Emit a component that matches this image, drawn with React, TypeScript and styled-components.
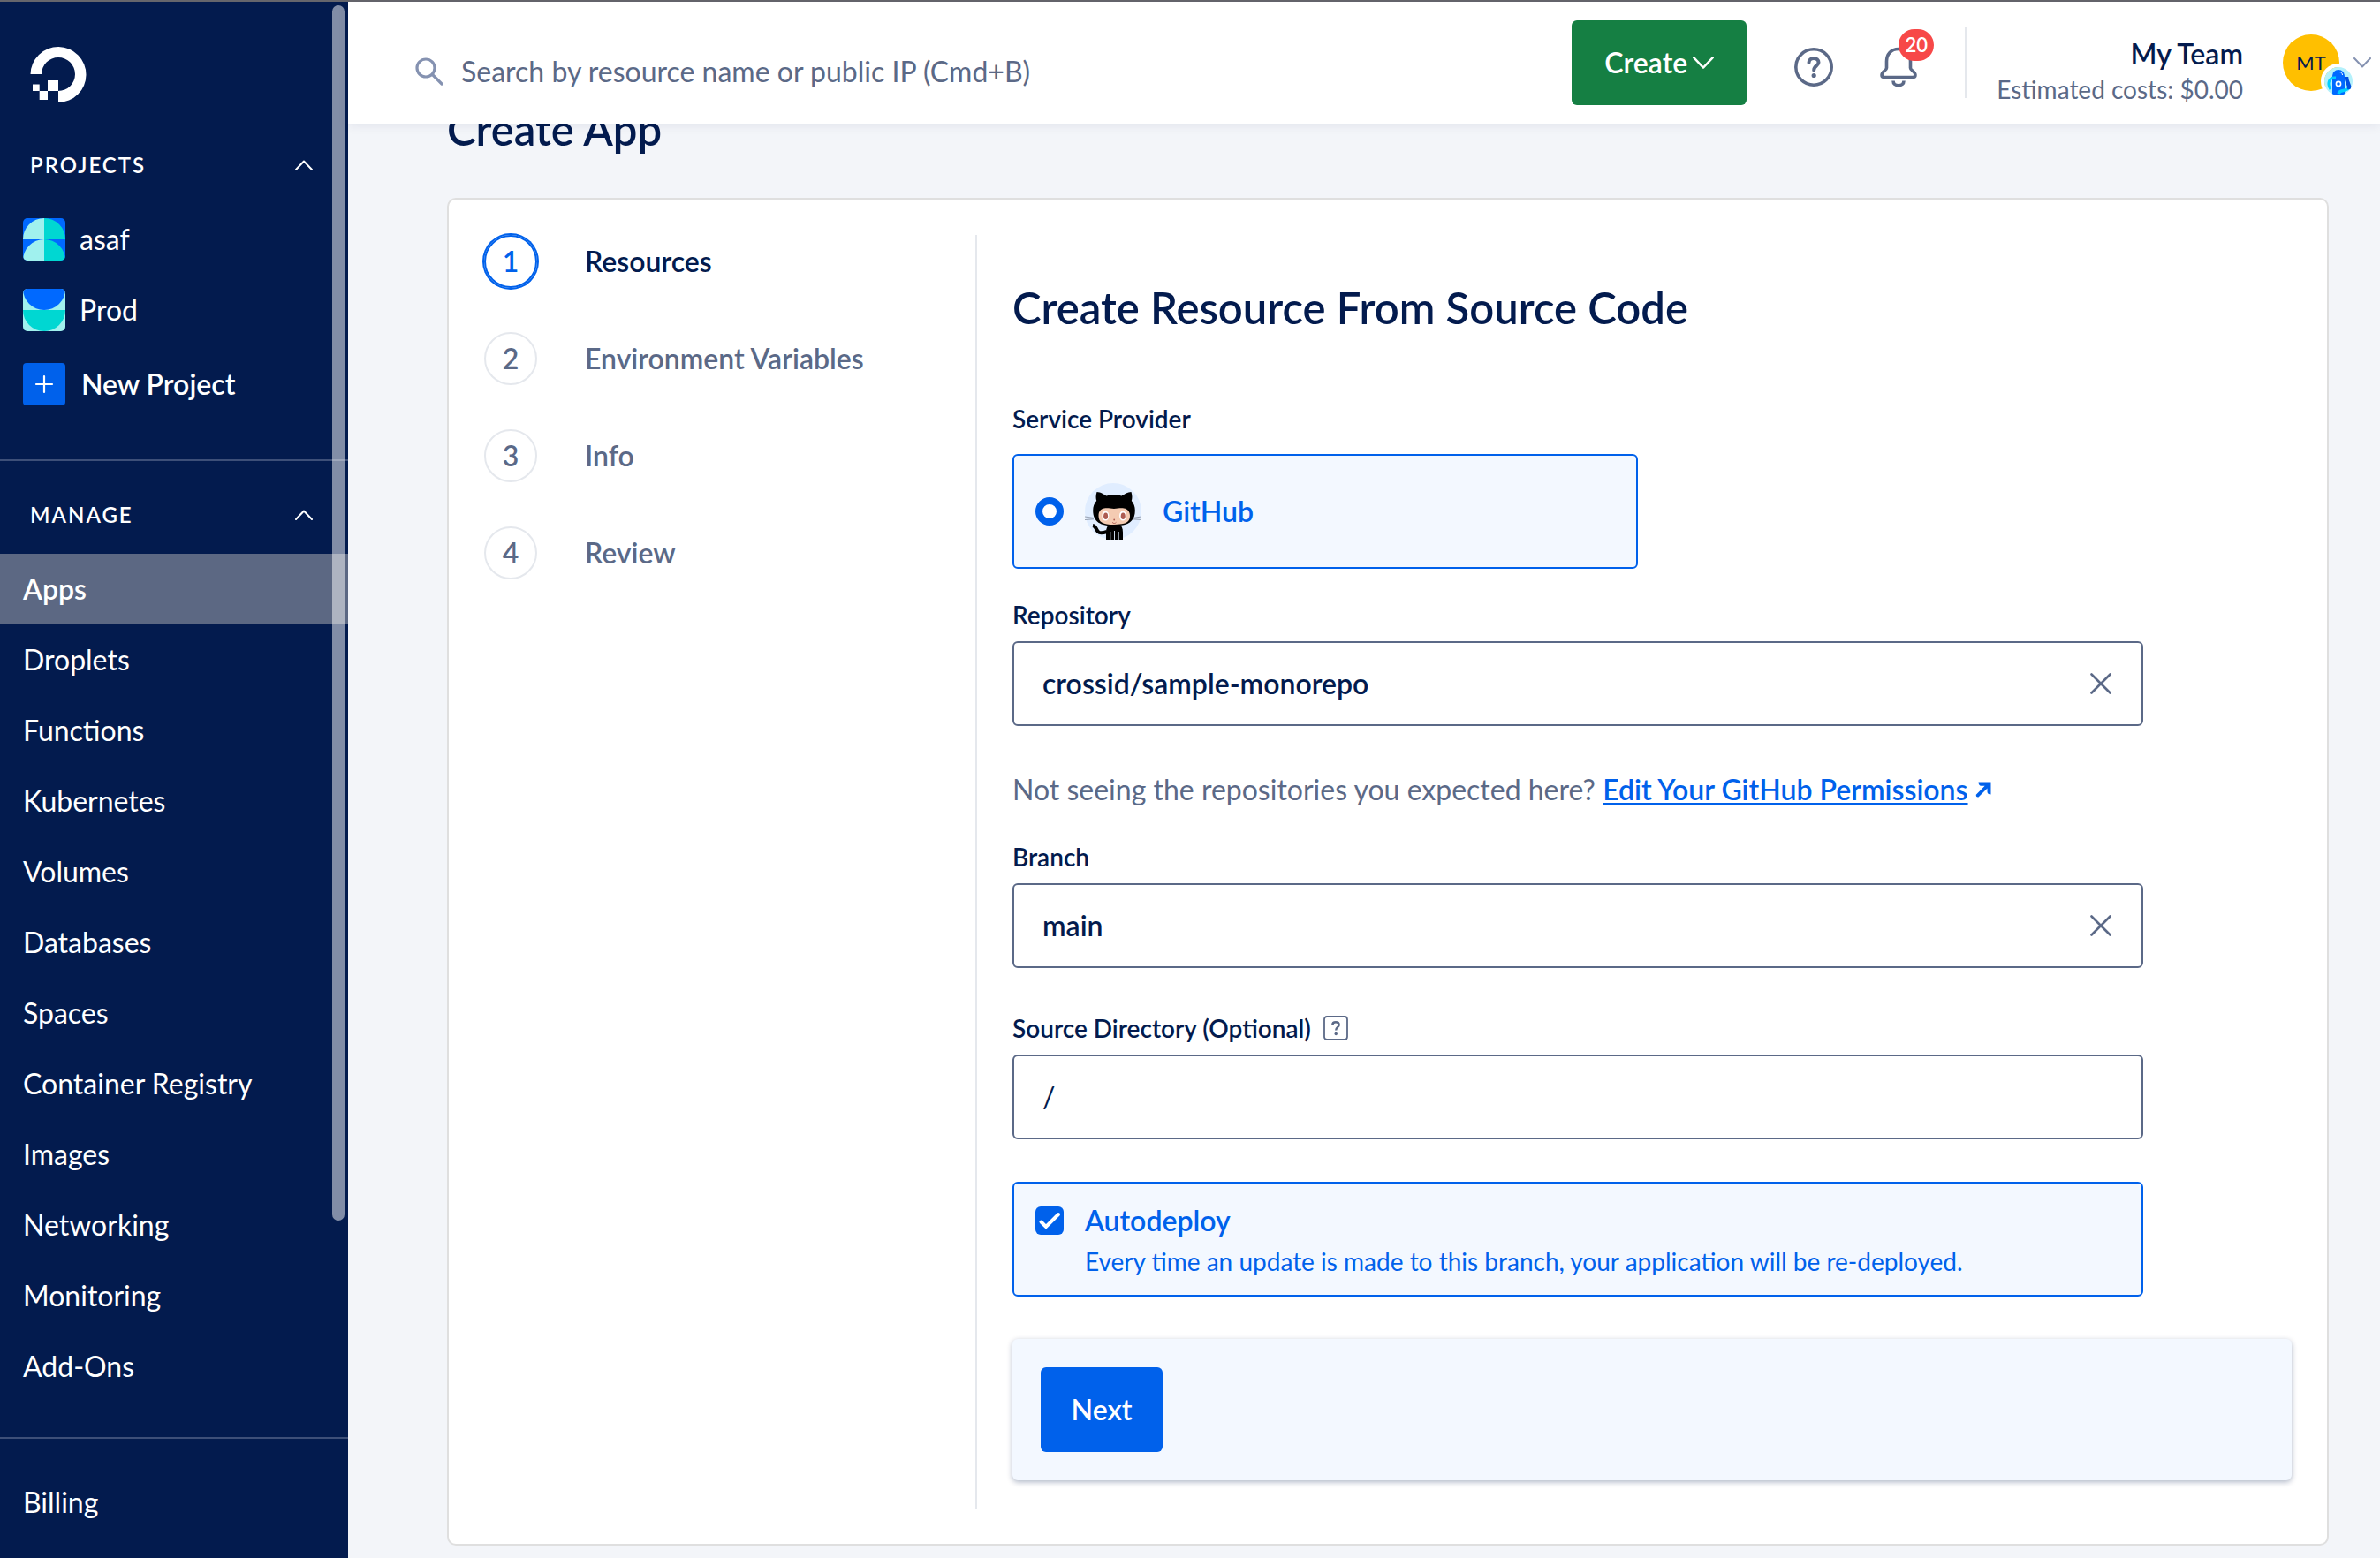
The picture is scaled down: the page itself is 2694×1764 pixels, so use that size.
import React from "react";
import styled, { createGlobalStyle } from "styled-components";

const color = {
  navy: "#031b4e",
  blue: "#0061eb",
  brightBlue: "#0069ff",
  teal: "#00d7d2",
  aqua: "#a0f1ee",
  slate: "#5b6987",
  mist: "#8592b1",
  line: "#e5e8ed",
  cardLine: "#dfdfdf",
  tint: "#f3f8ff",
  page: "#f3f5f9",
  green: "#157f43",
  red: "#f74848",
  yellow: "#ffbf00",
};

const semibold = 600;

const GlobalStyle = createGlobalStyle`
  *, *::before, *::after { box-sizing: border-box; }
  body {
    margin: 0;
    background: ${color.page};
    color: ${color.navy};
    font-family: Lato, "Open Sans", sans-serif;
    font-size: 32px;
    line-height: 40px;
  }
  h1, h2, p, ul, ol { margin: 0; padding: 0; }
  ul, ol { list-style: none; }
  button, input { font: inherit; color: inherit; }
  button { padding: 0; border: 0; background: none; cursor: pointer; }
  svg { display: block; flex: none; }
`;

const Shell = styled.div`
  display: flex;
  min-height: 100vh;
  border-top: 2px solid #66666c;
`;

/* Sidebar */

const Sidebar = styled.aside`
  position: relative;
  flex: none;
  width: 394px;
  padding-top: 50px;
  background: ${color.navy};
  color: #fff;
`;

const LogoLink = styled.a`
  display: block;
  width: 64px;
  margin: 0 0 42px 34px;
`;

const SectionToggle = styled.button`
  display: flex;
  align-items: center;
  justify-content: space-between;
  width: 100%;
  height: 57px;
  padding: 0 40px 0 34px;
  margin-bottom: 16px;
  font-size: 24px;
  font-weight: ${semibold};
  letter-spacing: 2px;
  text-transform: uppercase;
`;

const NavLink = styled.a<{ $active?: boolean }>`
  display: flex;
  align-items: center;
  height: 80px;
  padding: 0 26px;
  gap: 16px;
  background: ${(p) => (p.$active ? "#5c6883" : "transparent")};
  color: #fff;
  font-weight: ${(p) => (p.$active ? semibold : 400)};
  text-decoration: none;
`;

const NewProject = styled.button`
  display: flex;
  align-items: center;
  gap: 18px;
  height: 80px;
  margin: 4px 0 0;
  padding: 0 26px;
  font-weight: ${semibold};
`;

const SidebarRule = styled.hr<{ $gap: number }>`
  height: 2px;
  margin: ${(p) => p.$gap}px 0 32px;
  border: 0;
  background: #3d4f78;
`;

const ScrollThumb = styled.div`
  position: absolute;
  top: 4px;
  right: 4px;
  bottom: 382px;
  width: 14px;
  border-radius: 7px;
  background: rgba(255, 255, 255, 0.5);
`;

/* Top bar */

const Main = styled.div`
  flex: 1;
  min-width: 0;
`;

const TopBar = styled.header`
  position: relative;
  z-index: 1;
  display: flex;
  align-items: center;
  height: 138px;
  padding: 0 10px 0 76px;
  background: #fff;
  box-shadow: 0 2px 12px rgba(3, 27, 78, 0.08);
`;

const Search = styled.label`
  display: flex;
  flex: 1;
  align-items: center;
  gap: 20px;
  min-width: 0;
  padding-top: 20px;
`;

const SearchInput = styled.input`
  flex: 1;
  min-width: 0;
  padding: 0;
  border: 0;
  outline: 0;
  background: none;
  &::placeholder {
    color: ${color.slate};
    opacity: 1;
  }
`;

const CreateButton = styled.button`
  display: flex;
  align-items: center;
  justify-content: center;
  gap: 6px;
  width: 198px;
  height: 96px;
  border-radius: 6px;
  background: ${color.green};
  color: #fff;
  font-weight: ${semibold};
`;

const BarButton = styled.button<{ $gap: number }>`
  position: relative;
  margin: 10px 0 0 ${(p) => p.$gap}px;
`;

const Badge = styled.span`
  position: absolute;
  top: -20px;
  left: 21px;
  width: 40px;
  border-radius: 18px;
  background: ${color.red};
  color: #fff;
  font-size: 22px;
  font-weight: ${semibold};
  line-height: 36px;
  text-align: center;
`;

const Team = styled.div`
  display: flex;
  flex-direction: column;
  align-items: flex-end;
  height: 80px;
  margin-left: 54px;
  padding: 10px 0 0 33px;
  border-left: 3px solid ${color.line};
`;

const TeamName = styled.strong`
  font-weight: ${semibold};
`;

const Costs = styled.span`
  color: ${color.slate};
  font-size: 28px;
`;

const Account = styled.button`
  display: flex;
  align-items: center;
  gap: 16px;
  margin-left: 45px;
`;

const Avatar = styled.span`
  position: relative;
  width: 64px;
  border-radius: 50%;
  background: ${color.yellow};
  font-size: 22px;
  line-height: 64px;
  text-align: center;
`;

const AvatarMark = styled.span`
  position: absolute;
  left: 43px;
  top: 33px;
  border: 4px solid #fff;
  border-radius: 50%;
`;

/* Page */

const Content = styled.main`
  padding: 0 58px 14px 112px;
`;

const PageTitle = styled.h1`
  margin: -26px 0 46px;
  font-size: 49px;
  font-weight: ${semibold};
  line-height: 64px;
`;

const Card = styled.section`
  display: flex;
  padding: 40px;
  border: 2px solid ${color.cardLine};
  border-radius: 10px;
  background: #fff;
`;

const Steps = styled.ol`
  flex: none;
  display: flex;
  flex-direction: column;
  gap: 50px;
  width: 558px;
  border-right: 2px solid ${color.line};
`;

const Step = styled.li<{ $current?: boolean }>`
  display: flex;
  align-items: center;
  gap: 54px;
  height: 60px;
  color: ${(p) => (p.$current ? color.navy : color.slate)};
  font-weight: ${semibold};
`;

const StepNumber = styled.span<{ $current?: boolean }>`
  flex: none;
  display: flex;
  align-items: center;
  justify-content: center;
  width: 60px;
  height: 60px;
  border-radius: 50%;
  border: 2px solid ${(p) => (p.$current ? color.blue : color.line)};
  box-shadow: ${(p) => (p.$current ? `0 0 0 2px ${color.blue}` : "none")};
  color: ${(p) => (p.$current ? color.blue : color.slate)};
`;

const Form = styled.form`
  flex: 1;
  min-width: 0;
  padding: 50px 0 32px 40px;
`;

const FormTitle = styled.h2`
  margin-bottom: 76px;
  font-size: 49px;
  font-weight: ${semibold};
  line-height: 64px;
`;

const Field = styled.div<{ $after: number }>`
  max-width: 1280px;
  margin-bottom: ${(p) => p.$after}px;
`;

const Label = styled.label<{ $gap?: number }>`
  display: flex;
  align-items: center;
  gap: 14px;
  margin-bottom: ${(p) => p.$gap ?? 12}px;
  font-size: 28px;
  font-weight: ${semibold};
  line-height: 36px;
`;

const InputBox = styled.div`
  display: flex;
  align-items: center;
  height: 96px;
  padding: 0 34px 0 32px;
  border: 2px solid ${color.slate};
  border-radius: 6px;
  background: #fff;
`;

const TextInput = styled.input<{ $strong?: boolean }>`
  flex: 1;
  min-width: 0;
  padding: 0;
  border: 0;
  outline: 0;
  background: none;
  font-weight: ${(p) => (p.$strong ? semibold : 400)};
`;

const Choice = styled.label<{ $top?: boolean; $width: number }>`
  display: flex;
  align-items: ${(p) => (p.$top ? "flex-start" : "center")};
  gap: 24px;
  max-width: ${(p) => p.$width}px;
  height: 130px;
  padding: ${(p) => (p.$top ? "22px" : "0")} 24px;
  border: 2px solid ${color.blue};
  border-radius: 6px;
  background: ${color.tint};
  color: ${color.blue};
`;

const Radio = styled.input`
  flex: none;
  appearance: none;
  width: 32px;
  height: 32px;
  margin: 0;
  border: 8px solid ${color.blue};
  border-radius: 50%;
  background: #fff;
`;

const CheckWrap = styled.span`
  display: grid;
  margin-top: 4px;
  > * {
    grid-area: 1 / 1;
  }
  > svg {
    pointer-events: none;
  }
`;

const Checkbox = styled.input`
  appearance: none;
  width: 32px;
  height: 32px;
  margin: 0;
  border-radius: 6px;
  background: ${color.blue};
`;

const ChoiceTitle = styled.strong`
  display: block;
  font-weight: ${semibold};
`;

const ChoiceText = styled.span`
  display: block;
  margin-top: 6px;
  font-size: 28px;
`;

const Hint = styled.p`
  margin-bottom: 38px;
  color: ${color.slate};
`;

const HintLink = styled.a`
  display: inline-flex;
  align-items: center;
  gap: 8px;
  color: ${color.blue};
  font-weight: ${semibold};
  text-decoration: none;
  span {
    text-decoration: underline;
    text-decoration-thickness: 3px;
    text-underline-offset: 3px;
  }
`;

const Actions = styled.div`
  padding: 32px;
  border-radius: 6px;
  background: ${color.tint};
  box-shadow: 0 2px 6px rgba(3, 27, 78, 0.32);
`;

const NextButton = styled.button`
  width: 138px;
  height: 96px;
  border-radius: 6px;
  background: ${color.blue};
  color: #fff;
  font-weight: ${semibold};
`;

/* Drawings */

const Logo = () => (
  <svg width="64" height="64" viewBox="0 0 64 64" fill="#fff" aria-hidden="true">
    <path d="M32 64V51A19 19 0 1 0 13 32H0.500A31.500 31.500 0 1 1 32 64Z" />
    <path d="M20 39H32V51H20ZM10.700 51H20V61H10.700ZM3 43.500H10.700V51H3Z" />
  </svg>
);

const Chevron = ({ up, w = 20, stroke = "currentColor", thick = 2 }: { up?: boolean; w?: number; stroke?: string; thick?: number }) => (
  <svg width={w} height={w * 0.6} viewBox="0 0 20 12" fill="none" stroke={stroke} strokeWidth={thick} strokeLinecap="round" strokeLinejoin="round" aria-hidden="true">
    <path d={up ? "M1 11L10 1.500L19 11" : "M1 1L10 10.500L19 1"} />
  </svg>
);

const AsafIcon = () => (
  <svg width="48" height="48" viewBox="0 0 48 48" aria-hidden="true">
    <clipPath id="asaf-tile"><rect width="48" height="48" rx="5" /></clipPath>
    <g clipPath="url(#asaf-tile)">
      <rect width="48" height="48" fill={color.brightBlue} />
      <path d="M0 24A24 24 0 0 1 24 0V24ZM0 48A24 24 0 0 1 24 24V48Z" fill={color.aqua} />
      <path d="M48 24A24 24 0 0 0 24 0V24ZM48 48A24 24 0 0 0 24 24V48Z" fill={color.teal} />
    </g>
  </svg>
);

const ProdIcon = () => (
  <svg width="48" height="48" viewBox="0 0 48 48" aria-hidden="true">
    <clipPath id="prod-tile"><rect width="48" height="48" rx="5" /></clipPath>
    <g clipPath="url(#prod-tile)">
      <rect width="48" height="48" fill={color.aqua} />
      <path d="M0 0A24 24 0 0 0 48 0Z" fill={color.brightBlue} />
      <path d="M0 24A24 24 0 0 0 48 24Z" fill={color.teal} />
    </g>
  </svg>
);

const PlusIcon = () => (
  <svg width="48" height="48" viewBox="0 0 48 48" aria-hidden="true">
    <rect width="48" height="48" rx="4" fill={color.blue} />
    <path d="M24 15V33M15 24H33" stroke="#fff" strokeWidth="2.200" strokeLinecap="round" />
  </svg>
);

const SearchIcon = () => (
  <svg width="32" height="32" viewBox="0 0 32 32" fill="none" stroke={color.mist} strokeWidth="3.200" strokeLinecap="round" aria-hidden="true">
    <circle cx="12" cy="12" r="10" />
    <path d="M19.500 19.500L30 30" />
  </svg>
);

const HelpIcon = () => (
  <svg width="44" height="44" viewBox="0 0 44 44" fill="none" stroke={color.slate} aria-hidden="true">
    <circle cx="22" cy="22" r="20.200" strokeWidth="3.600" />
    <path d="M16.500 17C16.500 13.500 19 12 22 12C25.200 12 27.500 14 27.500 16.800C27.500 20.500 22.200 20.500 22.200 25.500" strokeWidth="4" strokeLinecap="round" />
    <circle cx="22.200" cy="31.500" r="2.600" fill={color.slate} stroke="none" />
  </svg>
);

const BellIcon = () => (
  <svg width="42" height="46" viewBox="0 0 42 46" fill="none" stroke={color.slate} strokeWidth="3.600" aria-hidden="true">
    <path d="M21 2.500C12.500 2.500 7.500 8.500 7.500 16.500V24C7.500 27 2 27.500 2 32C2 33.800 3.200 34.500 5 34.500H37C38.800 34.500 40 33.800 40 32C40 27.500 34.500 27 34.500 24V16.500C34.500 8.500 29.500 2.500 21 2.500Z" strokeLinejoin="round" />
    <path d="M15 38.500C15 42 17.500 43.800 21 43.800C24.500 43.800 27 42 27 38.500" />
  </svg>
);

const SharkMark = () => (
  <svg width="32" height="32" viewBox="0 0 32 32" fill="none" aria-hidden="true">
    <clipPath id="mark-disc"><circle cx="16" cy="16" r="16" /></clipPath>
    <g clipPath="url(#mark-disc)">
      <rect width="32" height="32" fill="#b5f1fb" />
      <path d="M9 32V11C9 6 12 3 16 3C20 3 23 6 23 11V32Z" fill={color.brightBlue} />
      <path d="M13 12C5 11 3 19 7 25" stroke="#00cfff" strokeWidth="3" />
      <path d="M16 30C18 24 25 29 29 22" stroke="#00cfff" strokeWidth="3.500" />
      <path d="M25 11C25 17 28 18 28.500 25" stroke="#0050e0" strokeWidth="4.500" />
      <path d="M17 5.500C19 5.500 20.500 7 20.500 9" stroke="#fff" strokeWidth="1" />
      <circle cx="16" cy="19" r="2.600" stroke="#fff" strokeWidth="1.600" />
    </g>
  </svg>
);

const Octocat = () => (
  <svg width="64" height="64" viewBox="0 0 64 64" aria-hidden="true">
    <circle cx="32" cy="32" r="32" fill="#e0edff" />
    <g stroke="#8d97a8" strokeWidth="0.900" fill="none">
      <path d="M0 38L10 39.500M0 41.500L10 40.800M3 39.500L10 40.200" />
      <path d="M64 38L54 39.500M64 41.500L54 40.800M61 39.500L54 40.200" />
    </g>
    <path d="M9 48C12.500 48.500 12.500 52.500 15 55C17 57.300 20.500 56.500 25 55" fill="none" stroke="#000" strokeWidth="4" />
    <path d="M24 64V56C24 51 25.500 48 28 46H39C41.500 48 43 51 43 56V64Z" />
    <path d="M28.800 55V64M33.500 54V64M38.200 55V64" stroke="#e0edff" strokeWidth="0.900" />
    <path d="M13.500 10C18 10 22 13 24.500 14.500C29 13.200 37 13.200 41.500 14.500C44 13 48 10 52.500 10C53.800 14 53.600 17.500 52.800 20C55.500 23 56.800 26.500 56.800 31C56.800 44 48 48.500 33 48.500C18 48.500 9.200 44 9.200 31C9.200 26.500 10.500 23 13.200 20C12.400 17.500 12.200 14 13.500 10Z" />
    <path d="M22 28.500C26 28 29.500 29 33 29C36.500 29 40 28 44 28.500C48.500 29 51 32.500 51 37C51 44.500 45.500 47 33 47C20.500 47 15.500 44.500 15.500 37C15.500 32.500 17.500 29 22 28.500Z" fill="#f4cbb2" />
    <ellipse cx="23.300" cy="37" rx="4" ry="5.600" fill="#fff" />
    <ellipse cx="43" cy="37" rx="4" ry="5.600" fill="#fff" />
    <ellipse cx="23.600" cy="37.200" rx="2.500" ry="3.800" fill="#ad5c51" />
    <ellipse cx="43.200" cy="37.200" rx="2.500" ry="3.800" fill="#ad5c51" />
    <circle cx="33.200" cy="41.500" r="0.900" fill="#ad5c51" />
    <path d="M31 44.300C32.300 46 34.200 46 35.500 44.300" fill="none" stroke="#ad5c51" strokeWidth="0.900" />
  </svg>
);

const CloseIcon = () => (
  <svg width="24" height="24" viewBox="0 0 24 24" stroke={color.slate} strokeWidth="2.600" strokeLinecap="round" aria-hidden="true">
    <path d="M1.500 1.500L22.500 22.500M22.500 1.500L1.500 22.500" />
  </svg>
);

const ArrowIcon = () => (
  <svg width="18" height="18" viewBox="0 0 18 18" aria-hidden="true">
    <path d="M3.500 0.500H17.500V14.500C15 14.500 13.500 13.500 13.500 11.500V7.500L3.500 17.500C1.500 18 0.500 16.500 0.800 14.800L10.700 4.700H6.500C4.500 4.700 3.500 3 3.500 0.500Z" fill={color.blue} />
  </svg>
);

const TipIcon = () => (
  <svg width="28" height="28" viewBox="0 0 28 28" fill="none" stroke={color.slate} aria-hidden="true">
    <rect x="1" y="1" width="26" height="26" rx="3" strokeWidth="1.800" />
    <path d="M10.300 10.500C10.300 8.300 12 7.300 14 7.300C16.200 7.300 17.700 8.500 17.700 10.400C17.700 13 14.200 13 14.200 16.500" strokeWidth="2.400" />
    <circle cx="14.200" cy="20.500" r="1.700" fill={color.slate} stroke="none" />
  </svg>
);

const CheckIcon = () => (
  <svg width="32" height="32" viewBox="0 0 32 32" fill="none" stroke="#fff" strokeWidth="4" strokeLinecap="round" aria-hidden="true">
    <path d="M6.500 17.500L12 23L26 9" />
  </svg>
);

/* Data */

const manageLinks = [
  "Apps", "Droplets", "Functions", "Kubernetes", "Volumes", "Databases",
  "Spaces", "Container Registry", "Images", "Networking", "Monitoring", "Add-Ons",
];

const steps = ["Resources", "Environment Variables", "Info", "Review"];

export default function App() {
  return (
    <>
      <GlobalStyle />
      <Shell>
        <Sidebar>
          <LogoLink href="#" aria-label="Home"><Logo /></LogoLink>
          <nav>
            <SectionToggle type="button" aria-expanded="true">Projects<Chevron up /></SectionToggle>
            <ul>
              <li><NavLink href="#"><AsafIcon />asaf</NavLink></li>
              <li><NavLink href="#"><ProdIcon />Prod</NavLink></li>
            </ul>
            <NewProject type="button"><PlusIcon />New Project</NewProject>
            <SidebarRule $gap={45} />
            <SectionToggle type="button" aria-expanded="true">Manage<Chevron up /></SectionToggle>
            <ul>
              {manageLinks.map((name) => (
                <li key={name}>
                  <NavLink href="#" $active={name === "Apps"}>{name}</NavLink>
                </li>
              ))}
            </ul>
            <SidebarRule $gap={40} />
            <NavLink href="#">Billing</NavLink>
          </nav>
          <ScrollThumb />
        </Sidebar>

        <Main>
          <TopBar>
            <Search>
              <SearchIcon />
              <SearchInput type="search" aria-label="Search" placeholder="Search by resource name or public IP (Cmd+B)" />
            </Search>
            <CreateButton type="button">Create<Chevron w={24} /></CreateButton>
            <BarButton type="button" $gap={54} aria-label="Help"><HelpIcon /></BarButton>
            <BarButton type="button" $gap={53} aria-label="Notifications">
              <BellIcon />
              <Badge>20</Badge>
            </BarButton>
            <Team>
              <TeamName>My Team</TeamName>
              <Costs>Estimated costs: $0.00</Costs>
            </Team>
            <Account type="button" aria-label="Account">
              <Avatar>MT<AvatarMark><SharkMark /></AvatarMark></Avatar>
              <Chevron stroke={color.mist} />
            </Account>
          </TopBar>

          <Content>
            <PageTitle>Create App</PageTitle>
            <Card>
              <Steps>
                {steps.map((name, i) => (
                  <Step key={name} $current={i === 0}>
                    <StepNumber $current={i === 0}>{i + 1}</StepNumber>
                    {name}
                  </Step>
                ))}
              </Steps>

              <Form>
                <FormTitle>Create Resource From Source Code</FormTitle>
                <Field $after={34}>
                  <Label htmlFor="provider" $gap={22}>Service Provider</Label>
                  <Choice $width={708}>
                    <Radio id="provider" type="radio" name="provider" defaultChecked />
                    <Octocat />
                    <ChoiceTitle>GitHub</ChoiceTitle>
                  </Choice>
                </Field>
                <Field $after={52}>
                  <Label htmlFor="repository">Repository</Label>
                  <InputBox>
                    <TextInput id="repository" $strong defaultValue="crossid/sample-monorepo" />
                    <button type="button" aria-label="Clear repository"><CloseIcon /></button>
                  </InputBox>
                </Field>
                <Hint>
                  Not seeing the repositories you expected here?{" "}
                  <HintLink href="#"><span>Edit Your GitHub Permissions</span><ArrowIcon /></HintLink>
                </Hint>
                <Field $after={50}>
                  <Label htmlFor="branch">Branch</Label>
                  <InputBox>
                    <TextInput id="branch" $strong defaultValue="main" />
                    <button type="button" aria-label="Clear branch"><CloseIcon /></button>
                  </InputBox>
                </Field>
                <Field $after={48}>
                  <Label htmlFor="directory">Source Directory (Optional)<TipIcon /></Label>
                  <InputBox>
                    <TextInput id="directory" defaultValue="/" />
                  </InputBox>
                </Field>
                <Field $after={48}>
                  <Choice $top $width={1280}>
                    <CheckWrap>
                      <Checkbox type="checkbox" defaultChecked />
                      <CheckIcon />
                    </CheckWrap>
                    <span>
                      <ChoiceTitle>Autodeploy</ChoiceTitle>
                      <ChoiceText>Every time an update is made to this branch, your application will be re-deployed.</ChoiceText>
                    </span>
                  </Choice>
                </Field>
                <Actions>
                  <NextButton type="button">Next</NextButton>
                </Actions>
              </Form>
            </Card>
          </Content>
        </Main>
      </Shell>
    </>
  );
}
